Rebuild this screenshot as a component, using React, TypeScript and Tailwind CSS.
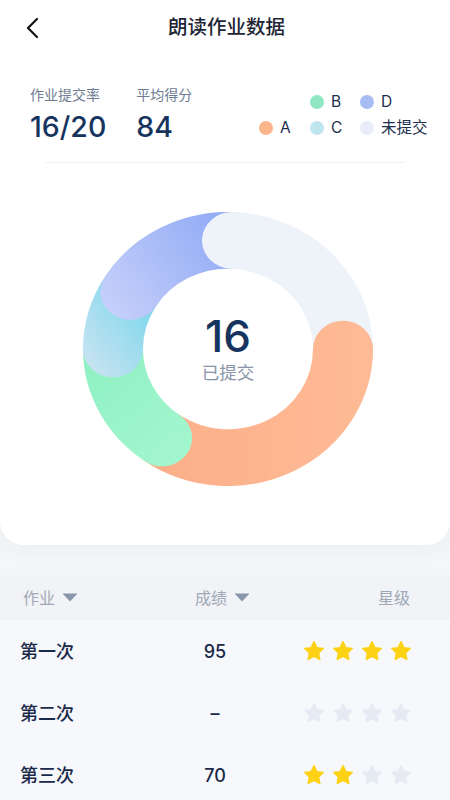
import React from "react";

// donut geometry, in viewBox units (box is squashed vertically when drawn)
const CX = 145;
const CY = 145;
const R = 115;

function arc(from: number, to: number) {
  const rad = (d: number) => (d * Math.PI) / 180;
  const x1 = CX + R * Math.cos(rad(from));
  const y1 = CY + R * Math.sin(rad(from));
  const x2 = CX + R * Math.cos(rad(to));
  const y2 = CY + R * Math.sin(rad(to));
  const large = to - from > 180 ? 1 : 0;
  return `M ${x1} ${y1} A ${R} ${R} 0 ${large} 1 ${x2} ${y2}`;
}

const segments = [
  { from: 0, to: 125, stroke: "url(#gA)" },
  { from: 125, to: 180, stroke: "url(#gB)" },
  { from: 180, to: 212, stroke: "url(#gC)" },
  { from: 212, to: 272, stroke: "url(#gD)" },
  { from: 272, to: 360, stroke: "#eef2f9" },
];

function Donut() {
  return (
    <div className="relative ml-[83px] w-[290px] h-[274px]">
      <svg width="290" height="274" viewBox="0 0 290 290" preserveAspectRatio="none">
        <defs>
          <linearGradient id="gA" gradientUnits="userSpaceOnUse" x1="30" y1="200" x2="290" y2="200">
            <stop offset="0" stopColor="#fbad86" />
            <stop offset="1" stopColor="#febb96" />
          </linearGradient>
          <linearGradient id="gB" gradientUnits="userSpaceOnUse" x1="0" y1="150" x2="100" y2="260">
            <stop offset="0" stopColor="#8ff0c2" />
            <stop offset="1" stopColor="#a3f6cf" />
          </linearGradient>
          <linearGradient id="gC" gradientUnits="userSpaceOnUse" x1="0" y1="160" x2="70" y2="110">
            <stop offset="0" stopColor="#c9e3f1" />
            <stop offset="1" stopColor="#82d8ec" />
          </linearGradient>
          <linearGradient id="gD" gradientUnits="userSpaceOnUse" x1="30" y1="110" x2="150" y2="30">
            <stop offset="0" stopColor="#c6cffa" />
            <stop offset="1" stopColor="#92acf5" />
          </linearGradient>
        </defs>
        {segments.map((s, i) => (
          <path key={i} d={arc(s.from, s.to)} fill="none" stroke={s.stroke} strokeWidth="60" strokeLinecap="round" />
        ))}
        {/* orange head sits over the grey tail */}
        <path d={arc(0, 3)} fill="none" stroke="url(#gA)" strokeWidth="60" strokeLinecap="round" />
      </svg>
      <div className="absolute inset-0 flex flex-col items-center justify-center">
        <span className="font-['Inter',sans-serif] text-[44px] leading-[46px] font-medium text-[#17345e]">16</span>
        <span className="mt-[2px] text-[17.5px] leading-[24px] text-[#8a94a8]">已提交</span>
      </div>
    </div>
  );
}

function Star({ on }: { on: boolean }) {
  const c = on ? "#fdd215" : "#e6ebf3";
  return (
    <svg width="24" height="24" viewBox="0 0 24 24">
      <path
        d="M12 2.8l2.8 5.9 6.4.8-4.7 4.4 1.2 6.4L12 17.2l-5.7 3.1 1.2-6.4-4.7-4.4 6.4-.8z"
        fill={c}
        stroke={c}
        strokeWidth="1.6"
        strokeLinejoin="round"
      />
    </svg>
  );
}

function Caret() {
  return (
    <svg width="16" height="9" viewBox="0 0 16 9" className="ml-[7px]">
      <path d="M0.5 0.5h15l-7.5 8z" fill="#8a96aa" />
    </svg>
  );
}

const legendDot = (color: string, label: string) => (
  <div className="flex items-center h-[26px]">
    <span className="w-[14px] h-[14px] rounded-full" style={{ backgroundColor: color }} />
    <span className="ml-[7px] text-[15.5px] text-[#1c2e4f]">{label}</span>
  </div>
);

const rows = [
  { name: "第一次", score: "95", stars: 4 },
  { name: "第二次", score: "–", stars: 0 },
  { name: "第三次", score: "70", stars: 2 },
];

export default function App() {
  return (
    <div className="w-[450px] h-[800px] overflow-hidden bg-[#f4f6f9] font-['Inter','Noto_Sans_CJK_SC',sans-serif]">
      <div className="bg-white rounded-b-[24px] h-[545px] shadow-[0_6px_20px_rgba(30,50,90,0.04)]">
        {/* nav bar */}
        <div className="h-[56px] grid grid-cols-[60px_1fr_60px] items-center">
          <div className="pl-[26px] flex items-center">
            <svg width="14" height="22" viewBox="0 0 14 22">
              <polyline points="11,2 2,11 11,20" fill="none" stroke="#111" strokeWidth="2.2" strokeLinecap="round" strokeLinejoin="round" />
            </svg>
          </div>
          <div className="text-center text-[19.5px] font-medium text-[#1e2635] pl-[3px]">朗读作业数据</div>
          <div />
        </div>

        {/* stats + legend */}
        <div className="mt-[29px] pl-[30px] pr-[20px] flex items-start">
          <div>
            <div className="text-[14px] leading-[20px] text-[#6d7c92]">作业提交率</div>
            <div className="mt-[4px] text-[28.5px] leading-[36px] font-medium text-[#17345e]">16/20</div>
          </div>
          <div className="ml-[30px]">
            <div className="text-[14px] leading-[20px] text-[#6d7c92]">平均得分</div>
            <div className="mt-[4px] text-[28.5px] leading-[36px] font-medium text-[#17345e]">84</div>
          </div>
          <div className="ml-auto mt-[4px] grid grid-cols-[51px_50px_70px]">
            <div />
            {legendDot("#8fe6c3", "B")}
            {legendDot("#a7bcf3", "D")}
            {legendDot("#fcb48d", "A")}
            {legendDot("#bfe5ee", "C")}
            {legendDot("#e9edfa", "未提交")}
          </div>
        </div>

        <div className="mt-[17px] mx-[45px] h-px bg-[#eef0f4]" />

        <div className="mt-[49px]">
          <Donut />
        </div>
      </div>

      {/* table */}
      <div className="mt-[30px]">
        <div className="h-[45px] bg-[#f1f3f7] flex items-center pl-[23px] pr-[40px] text-[16px] text-[#a0a8b6]">
          <div className="w-[172px] flex items-center">
            作业
            <Caret />
          </div>
          <div className="flex items-center">
            成绩
            <Caret />
          </div>
          <div className="ml-auto">星级</div>
        </div>
        {rows.map((r) => (
          <div key={r.name} className="h-[62px] bg-[#f6f8fb] flex items-center pl-[20px] pr-[37px]">
            <div className="w-[150px] text-[18px] font-medium text-[#1a2a4a]">{r.name}</div>
            <div className="w-[90px] text-center text-[18px] font-medium text-[#1a2a4a]">{r.score}</div>
            <div className="ml-auto flex gap-[5px]">
              {[0, 1, 2, 3].map((i) => (
                <Star key={i} on={i < r.stars} />
              ))}
            </div>
          </div>
        ))}
      </div>
    </div>
  );
}
